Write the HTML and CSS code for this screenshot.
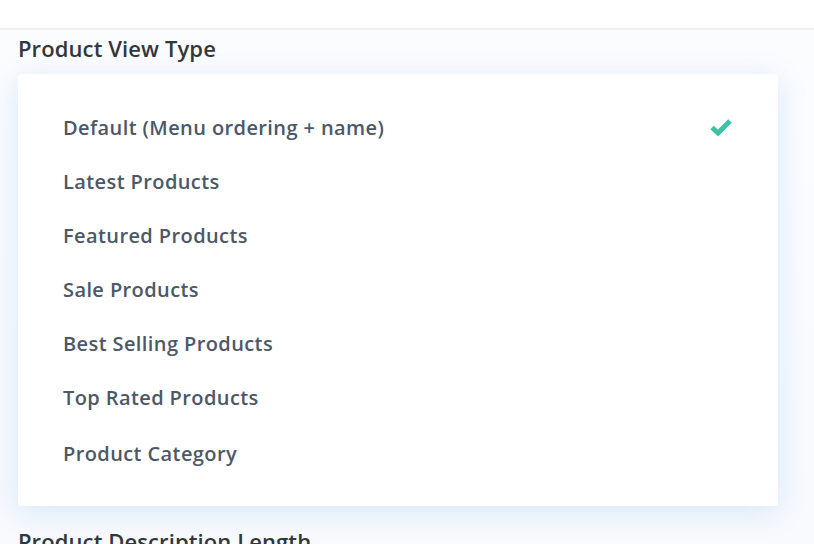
FILE: index.html
```html
<!DOCTYPE html>
<html>
<head>
  <title>Product Settings</title>
  <link rel="stylesheet" href="styles.css">
</head>
<body>
  <div class="topbar"></div>
  <div class="settings">
    <div class="field">
      <h3 class="field-label">Product View Type</h3>
      <ul class="options">
        <li class="option selected">
          <span>Default (Menu ordering + name)</span>
          <svg class="check" width="24" height="18" viewBox="0 0 24 18">
            <path d="M3 9.5 L9 15 L21 3" fill="none" stroke="#3cc3a6" stroke-width="5" stroke-linejoin="miter"/>
          </svg>
        </li>
        <li class="option"><span>Latest Products</span></li>
        <li class="option"><span>Featured Products</span></li>
        <li class="option"><span>Sale Products</span></li>
        <li class="option"><span>Best Selling Products</span></li>
        <li class="option"><span>Top Rated Products</span></li>
        <li class="option last"><span>Product Category</span></li>
      </ul>
    </div>
    <div class="field">
      <h3 class="field-label">Product Description Length</h3>
    </div>
  </div>
</body>
</html>
```

FILE: styles.css
```css
body {
  margin: 0;
  font-family: "Open Sans", "Noto Sans", sans-serif;
  background-color: #fff;
  overflow: hidden;
}

.topbar {
  height: 28px;
  background-color: #fff;
  border-bottom: 2px solid #eef2f6;
}

.settings {
  padding: 4px 36px 0 18px;
  background: linear-gradient(to bottom, #fbfcfe, #f7f9fd);
  min-height: 600px;
}

.field {
  margin-bottom: 21px;
}

.field-label {
  margin: 0 0 12px 0;
  font-size: 22px;
  font-weight: 600;
  line-height: 28px;
  color: #32373c;
  letter-spacing: 0.1px;
}

.options {
  list-style: none;
  margin: 0;
  padding: 26px 45px 24px 45px;
  background-color: #fff;
  border-radius: 4px;
  box-shadow: 0 5px 30px rgba(43, 135, 218, 0.16);
}

.option {
  display: flex;
  justify-content: space-between;
  align-items: center;
  height: 54px;
  font-size: 20px;
  font-weight: 600;
  color: #4c5866;
  letter-spacing: 0.4px;
}

.option.last {
  height: 58px;
}

.check {
  display: block;
}
```
